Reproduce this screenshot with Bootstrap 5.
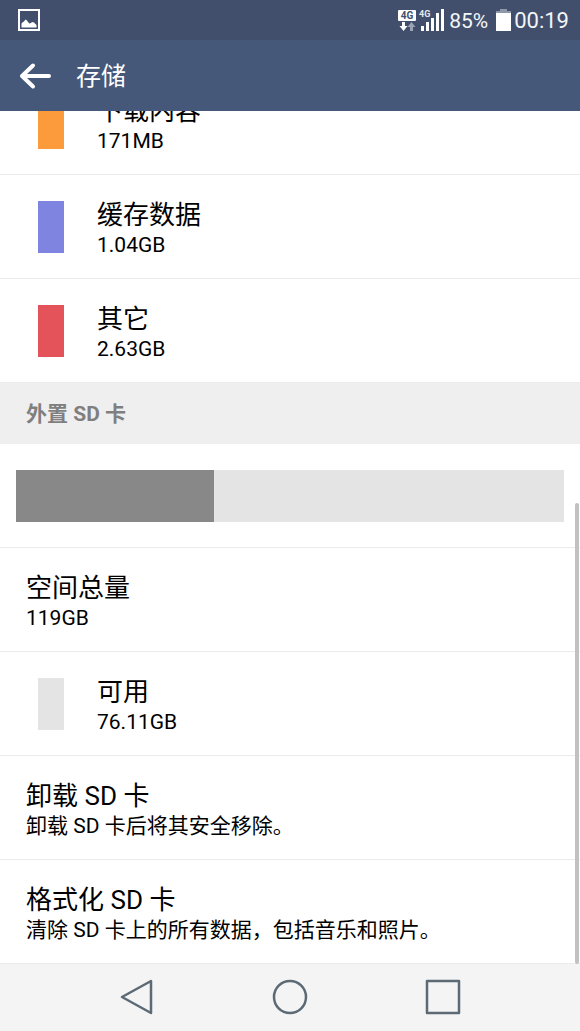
<!DOCTYPE html>
<html lang="zh-CN">
<head>
<meta charset="utf-8">
<meta name="viewport" content="width=device-width, initial-scale=1">
<title>存储</title>
<link href="https://cdn.jsdelivr.net/npm/bootstrap@5.3.0/dist/css/bootstrap.min.css" rel="stylesheet">
<style>
  body { font-family: Roboto, "Noto Sans CJK SC", sans-serif; color: #000; background: #fff; }
  .status-strip { background: #414f6c; height: 40px; color: #f3f5f8; padding: 0 11px 0 16px; }
  .battery-text { font-size: 21px; line-height: 40px; padding-top: 2px; }
  .clock-text { font-size: 22px; line-height: 40px; padding-top: 2px; margin-left: 3px; }
  .signal-icons { margin-right: 5px; }
  .title-strip { background: #465879; height: 71px; }
  .title-strip h1 { font-size: 25px; line-height: 36px; padding-top: 2px; }
  .scroll-area { min-height: 0; }
  .entry { height: 104px; padding: 0 26px; border: 0; border-bottom: 1px solid #ebebeb; color: #000; background: #fff; border-radius: 0; }
  .entry.has-swatch { padding-left: 38px; }
  .entry-text { padding-top: 5px; }
  .swatch { width: 26px; height: 52px; margin-right: 33px; }
  .entry-title { font-size: 26px; line-height: 32px; }
  .entry-sub { font-size: 21px; line-height: 29px; }
  .section-head { background: #efefef; color: #7f7f7f; font-size: 21px; line-height: 60px; padding: 1px 26px 0; }
  .usage { padding: 26px 16px 25px; border-bottom: 1px solid #ebebeb; }
  .usage .progress { height: 52px; background: #e4e4e4; border-radius: 0; }
  .usage .progress-bar { background: #888; }
  .thumb { width: 4px; top: 46%; right: 1px; background: #c1c1c1; }
  .key-strip { background: #f4f4f4; height: 67px; padding: 0 60px 2px; }
  .key-strip svg { fill: none; stroke: #5b6a74; stroke-width: 2.5; stroke-linejoin: round; }
  .orange { background: #fb9b3c; } .violet { background: #7f84e0; }
  .crimson { background: #e35359; } .pale { background: #e4e4e4; }
</style>
</head>
<body>
<div class="vh-100 d-flex flex-column overflow-hidden">
  <div class="status-strip d-flex align-items-center flex-shrink-0">
    <svg class="me-auto" width="26" height="24" viewBox="0 0 26 24" aria-hidden="true">
      <rect x="3" y="2" width="20" height="20" fill="none" stroke="#fff" stroke-width="2"/>
      <path d="M5.500 19.500V15.500L7 14l1-.5L9.500 11.500l1.500 1 1 1.500 1.500 1.500 1.500-.5 1-1 2 .5 1.500 1.500 1 1v2.500z" fill="#fff"/>
    </svg>
    <svg class="signal-icons" width="46" height="24" viewBox="0 0 46 24" aria-label="4G">
      <rect x="0" y="2" width="18" height="11" rx="1" fill="#fff"/>
      <text x="9" y="11" font-size="10" font-weight="700" text-anchor="middle" fill="#414f6c">4G</text>
      <path d="M4 14h3v4h2.500L5.500 23 1.500 18H4z" fill="#fff"/>
      <path d="M12 23h3v-4h2.500L13.500 14l-4 5H12z" fill="#9aa3b4"/>
      <text x="21" y="9" font-size="9" font-weight="700" fill="#e6e9ee">4G</text>
      <path d="M23 18h3v5h-3zM28 14h3v9h-3zM33 10h3v13h-3zM38 5h3v18h-3zM43 1h3v22h-3z" fill="#fff"/>
    </svg>
    <span class="battery-text me-2">85%</span>
    <svg width="15" height="24" viewBox="0 0 15 24" aria-hidden="true">
      <path d="M4 1h7v2h4v3H0V3h4z" fill="#8f98aa"/><path d="M0 5h15v18H0z" fill="#fff"/>
    </svg>
    <span class="clock-text">00:19</span>
  </div>

  <header class="title-strip d-flex align-items-center flex-shrink-0 text-white ps-3">
    <button type="button" class="btn border-0 p-0 d-flex" aria-label="返回">
      <svg width="40" height="30" viewBox="0 0 40 30" fill="none" stroke="#fff" stroke-width="4" stroke-linecap="round" stroke-linejoin="round"><path d="M33 15H6M17 4.500L6 15l11 10.500"/></svg>
    </button>
    <h1 class="fw-normal mb-0 ms-3 ps-1">存储</h1>
  </header>

  <main class="scroll-area flex-grow-1 d-flex flex-column justify-content-end overflow-hidden position-relative">
    <div class="entry has-swatch d-flex flex-shrink-0 align-items-center"><span class="swatch orange"></span><div class="entry-text"><div class="entry-title">下载内容</div><div class="entry-sub">171MB</div></div></div>
    <div class="entry has-swatch d-flex flex-shrink-0 align-items-center"><span class="swatch violet"></span><div class="entry-text"><div class="entry-title">缓存数据</div><div class="entry-sub">1.04GB</div></div></div>
    <div class="entry has-swatch d-flex flex-shrink-0 align-items-center"><span class="swatch crimson"></span><div class="entry-text"><div class="entry-title">其它</div><div class="entry-sub">2.63GB</div></div></div>
    <h2 class="section-head fw-bold mb-0 flex-shrink-0">外置 SD 卡</h2>
    <div class="usage flex-shrink-0">
      <div class="progress" role="progressbar" aria-label="已用空间" aria-valuenow="36" aria-valuemin="0" aria-valuemax="100"><div class="progress-bar" style="width: 36.1%"></div></div>
    </div>
    <div class="entry d-flex flex-shrink-0 align-items-center"><div class="entry-text"><div class="entry-title">空间总量</div><div class="entry-sub">119GB</div></div></div>
    <div class="entry has-swatch d-flex flex-shrink-0 align-items-center"><span class="swatch pale"></span><div class="entry-text"><div class="entry-title">可用</div><div class="entry-sub">76.11GB</div></div></div>
    <button type="button" class="entry btn d-flex flex-shrink-0 align-items-center text-start"><span class="entry-text"><span class="entry-title d-block">卸载 SD 卡</span><span class="entry-sub d-block">卸载 SD 卡后将其安全移除。</span></span></button>
    <button type="button" class="entry btn d-flex flex-shrink-0 align-items-center text-start"><span class="entry-text"><span class="entry-title d-block">格式化 SD 卡</span><span class="entry-sub d-block">清除 SD 卡上的所有数据，包括音乐和照片。</span></span></button>
    <div class="thumb position-absolute bottom-0 rounded-pill"></div>
  </main>

  <nav class="key-strip d-flex flex-shrink-0" aria-label="导航">
    <button type="button" class="btn border-0 p-0 col-4" aria-label="后退"><svg width="36" height="36" viewBox="0 0 36 36"><path d="M32 2v32L3 18z"/></svg></button>
    <button type="button" class="btn border-0 p-0 col-4" aria-label="主屏幕"><svg width="36" height="36" viewBox="0 0 36 36"><circle cx="18" cy="18" r="16"/></svg></button>
    <button type="button" class="btn border-0 p-0 col-4" aria-label="最近任务"><svg width="36" height="36" viewBox="0 0 36 36"><rect x="2" y="2" width="32" height="32"/></svg></button>
  </nav>
</div>
<script src="https://cdn.jsdelivr.net/npm/bootstrap@5.3.0/dist/js/bootstrap.bundle.min.js"></script>
</body>
</html>
